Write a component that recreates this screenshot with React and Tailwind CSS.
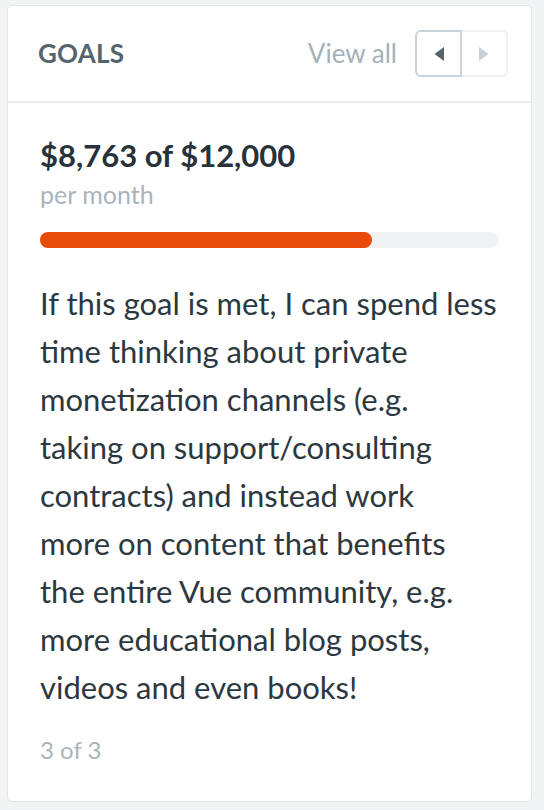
import React from 'react';

const goal = {
  raised: '$8,763',
  target: '$12,000',
  percent: 72.4,
  // line breaks follow the reference wrapping
  lines: [
    'If this goal is met, I can spend less',
    'time thinking about private',
    'monetization channels (e.g.',
    'taking on support/consulting',
    'contracts) and instead work',
    'more on content that benefits',
    'the entire Vue community, e.g.',
    'more educational blog posts,',
    'videos and even books!',
  ],
};

function Arrow({ dir }) {
  return (
    <svg width="10" height="14" viewBox="0 0 10 14">
      {dir === 'left' ? <path d="M10 0 L10 14 L0.5 7 Z" fill="currentColor" /> : <path d="M0 0 L0 14 L9.5 7 Z" fill="currentColor" />}
    </svg>
  );
}

export default function App() {
  return (
    <div className="w-[544px] h-[810px] bg-[#f1f3f5] pt-[5px] pl-[7px] font-['Lato','Liberation_Sans',sans-serif]">
      <div className="w-[525px] h-[797px] bg-white rounded-[5px] border border-[#e3e6e9] flex flex-col">
        <div className="h-[97px] flex items-center justify-between pl-[30px] pr-[23px] border-b-2 border-[#e9ecee]">
          <h2 className="text-[26px] font-bold text-[#56646e] tracking-[0.2px]">GOALS</h2>
          <div className="flex items-center gap-[18px]">
            <a className="text-[26px] text-[#a5b1b9]">View all</a>
            <div className="flex h-[47px]">
              <button className="w-[47px] flex items-center justify-center border-2 border-[#ccd3d8] rounded-l-[6px] text-[#56646e]">
                <Arrow dir="left" />
              </button>
              <button className="w-[46px] flex items-center justify-center border-2 border-l-0 border-[#eef0f2] rounded-r-[6px] text-[#c9d0d5]">
                <Arrow dir="right" />
              </button>
            </div>
          </div>
        </div>
        <div className="px-[32px] pt-[34px] flex flex-col">
          <div className="text-[31px] font-bold text-[#27323a] leading-[36px]">{goal.raised} of {goal.target}</div>
          <div className="text-[25px] text-[#a9b4bc] leading-[30px] mt-[6px]">per month</div>
          <div className="h-[16px] bg-[#f1f2f4] rounded-full mt-[23px]">
            <div className="h-full bg-[#e84a0a] rounded-full" style={{ width: `${goal.percent}%` }} />
          </div>
          <p className="text-[31px] leading-[48px] text-[#2c3840] mt-[31px] whitespace-nowrap">
            {goal.lines.map((l, i) => (
              <React.Fragment key={i}>
                {l}
                {i < goal.lines.length - 1 && <br />}
              </React.Fragment>
            ))}
          </p>
          <div className="text-[24px] leading-[30px] text-[#a9b4bc] mt-[24px]">3 of 3</div>
        </div>
      </div>
    </div>
  );
}
